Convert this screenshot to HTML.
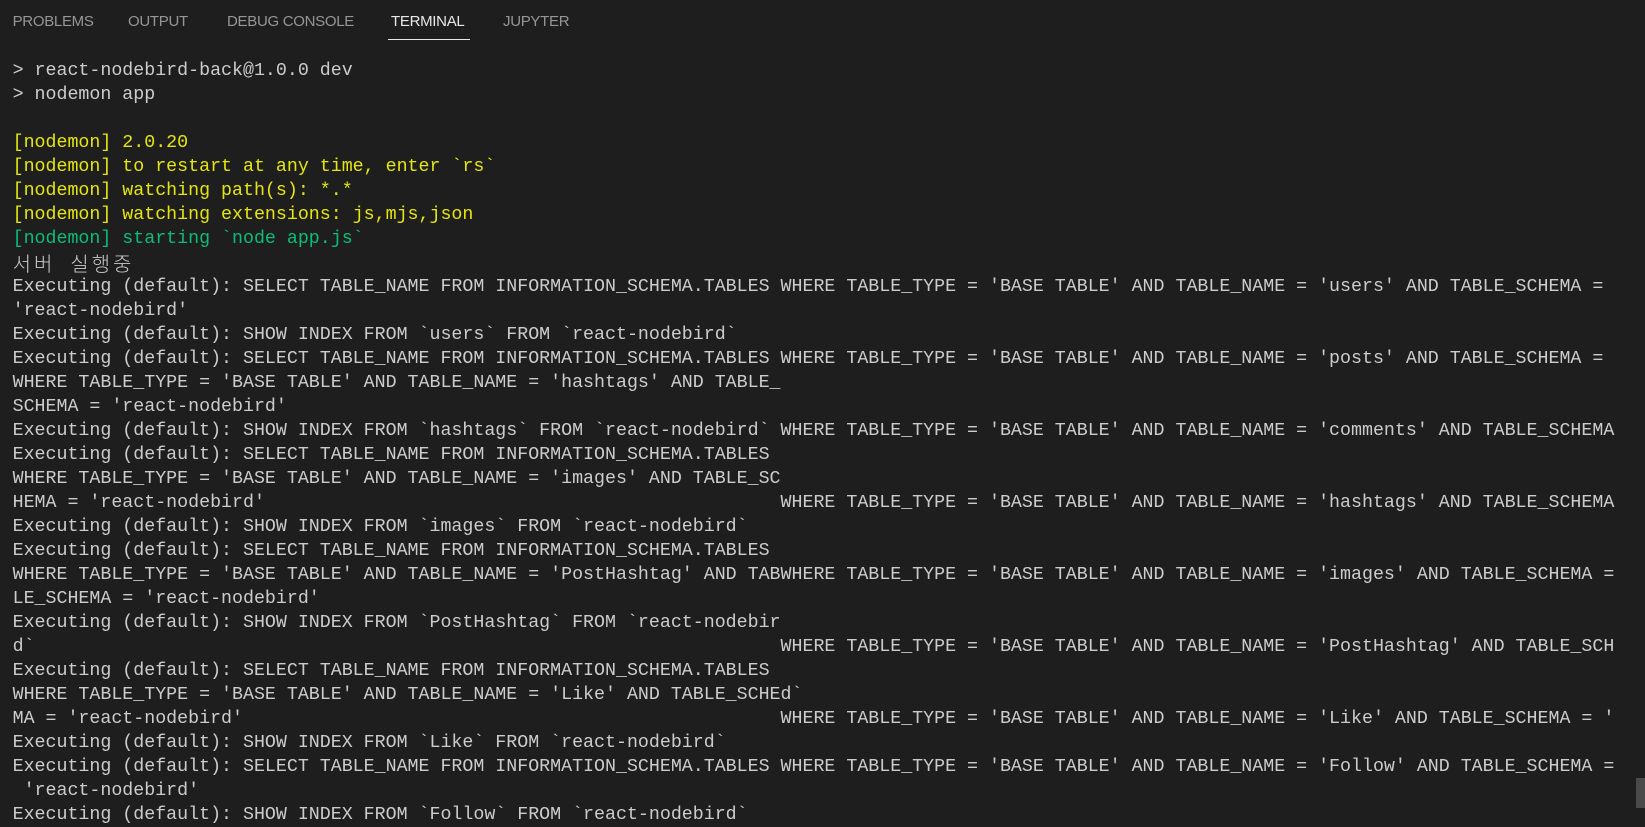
<!DOCTYPE html>
<html><head><meta charset="utf-8"><style>
html,body{margin:0;padding:0;background:#1e1e1e;width:1645px;height:826px;overflow:hidden}
.tabs{position:absolute;top:0;left:0;height:46px;width:100%;font-family:"Liberation Sans",sans-serif;font-size:15px;color:#969696;letter-spacing:-0.3px}
.tab{position:absolute;top:13px}
.act{color:#e7e7e7}
.ul{position:absolute;left:388px;top:39px;width:82px;height:1px;background:#e7e7e7}
.term{position:absolute;top:59px;left:12.6px;right:0;font-family:"Liberation Mono","Noto Sans CJK KR",monospace;font-size:18.3px;line-height:24px;color:#cccccc}
.l{position:relative;height:24px;white-space:pre}
.c{position:absolute;left:70ch;top:0}
.y{color:#e5e510}.g{color:#0dbc79}
.ko{font-family:"Noto Sans CJK KR",sans-serif;font-weight:300;font-size:20px;letter-spacing:3px;color:#cccccc}
.sb{position:absolute;left:1636px;top:778px;width:9px;height:30px;background:#4a4a4a}
</style></head><body>
<div class="tabs">
<span class="tab" style="left:12.6px">PROBLEMS</span>
<span class="tab" style="left:128px">OUTPUT</span>
<span class="tab" style="left:227px">DEBUG CONSOLE</span>
<span class="tab act" style="left:391px">TERMINAL</span>
<span class="tab" style="left:503px">JUPYTER</span>
<div class="ul"></div>
</div>
<div class="term"><div class="l">&gt; react-nodebird-back@1.0.0 dev</div><div class="l">&gt; nodemon app</div><div class="l"></div><div class="l y">[nodemon] 2.0.20</div><div class="l y">[nodemon] to restart at any time, enter `rs`</div><div class="l y">[nodemon] watching path(s): *.*</div><div class="l y">[nodemon] watching extensions: js,mjs,json</div><div class="l g">[nodemon] starting `node app.js`</div><div class="l ko">서버  실행중</div><div class="l">Executing (default): SELECT TABLE_NAME FROM INFORMATION_SCHEMA.TABLES WHERE TABLE_TYPE = 'BASE TABLE' AND TABLE_NAME = 'users' AND TABLE_SCHEMA =</div><div class="l">'react-nodebird'</div><div class="l">Executing (default): SHOW INDEX FROM `users` FROM `react-nodebird`</div><div class="l">Executing (default): SELECT TABLE_NAME FROM INFORMATION_SCHEMA.TABLES WHERE TABLE_TYPE = 'BASE TABLE' AND TABLE_NAME = 'posts' AND TABLE_SCHEMA =</div><div class="l">WHERE TABLE_TYPE = 'BASE TABLE' AND TABLE_NAME = 'hashtags' AND TABLE_</div><div class="l">SCHEMA = 'react-nodebird'</div><div class="l">Executing (default): SHOW INDEX FROM `hashtags` FROM `react-nodebird` WHERE TABLE_TYPE = 'BASE TABLE' AND TABLE_NAME = 'comments' AND TABLE_SCHEMA</div><div class="l">Executing (default): SELECT TABLE_NAME FROM INFORMATION_SCHEMA.TABLES</div><div class="l">WHERE TABLE_TYPE = 'BASE TABLE' AND TABLE_NAME = 'images' AND TABLE_SC</div><div class="l">HEMA = 'react-nodebird'<span class="c">WHERE TABLE_TYPE = 'BASE TABLE' AND TABLE_NAME = 'hashtags' AND TABLE_SCHEMA</span></div><div class="l">Executing (default): SHOW INDEX FROM `images` FROM `react-nodebird`</div><div class="l">Executing (default): SELECT TABLE_NAME FROM INFORMATION_SCHEMA.TABLES</div><div class="l">WHERE TABLE_TYPE = 'BASE TABLE' AND TABLE_NAME = 'PostHashtag' AND TABWHERE TABLE_TYPE = 'BASE TABLE' AND TABLE_NAME = 'images' AND TABLE_SCHEMA =</div><div class="l">LE_SCHEMA = 'react-nodebird'</div><div class="l">Executing (default): SHOW INDEX FROM `PostHashtag` FROM `react-nodebir</div><div class="l">d`<span class="c">WHERE TABLE_TYPE = 'BASE TABLE' AND TABLE_NAME = 'PostHashtag' AND TABLE_SCH</span></div><div class="l">Executing (default): SELECT TABLE_NAME FROM INFORMATION_SCHEMA.TABLES</div><div class="l">WHERE TABLE_TYPE = 'BASE TABLE' AND TABLE_NAME = 'Like' AND TABLE_SCHEd`</div><div class="l">MA = 'react-nodebird'<span class="c">WHERE TABLE_TYPE = 'BASE TABLE' AND TABLE_NAME = 'Like' AND TABLE_SCHEMA = '</span></div><div class="l">Executing (default): SHOW INDEX FROM `Like` FROM `react-nodebird`</div><div class="l">Executing (default): SELECT TABLE_NAME FROM INFORMATION_SCHEMA.TABLES WHERE TABLE_TYPE = 'BASE TABLE' AND TABLE_NAME = 'Follow' AND TABLE_SCHEMA =</div><div class="l"> 'react-nodebird'</div><div class="l">Executing (default): SHOW INDEX FROM `Follow` FROM `react-nodebird`</div></div>
<div class="sb"></div>
</body></html>
